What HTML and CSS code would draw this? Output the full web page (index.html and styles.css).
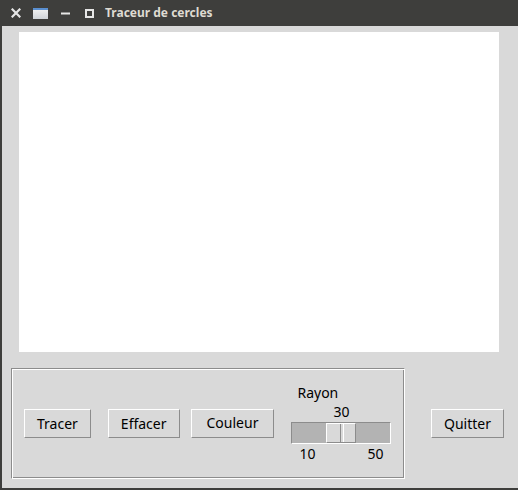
FILE: index.html
```html
<!DOCTYPE html>
<html lang="fr">
<head>
<meta charset="utf-8">
<title>Traceur de cercles</title>
<link rel="stylesheet" href="styles.css">
</head>
<body>
<div class="titlebar">
  <svg class="tb-icon tb-close" width="10" height="10" viewBox="0 0 10 10"><path d="M1.5 1.5 L8.5 8.5 M8.5 1.5 L1.5 8.5" stroke="#e6e6e6" stroke-width="2.2" stroke-linecap="square"/></svg>
  <svg class="tb-icon tb-app" width="15" height="11" viewBox="0 0 15 11"><defs><linearGradient id="g" x1="0" y1="0" x2="0" y2="1"><stop offset="0" stop-color="#f4f4f4"/><stop offset="1" stop-color="#cfd3d8"/></linearGradient></defs><rect x="0" y="0" width="15" height="11" fill="url(#g)"/><rect x="0" y="0" width="15" height="2" fill="#5a8fd0"/></svg>
  <svg class="tb-icon tb-min" width="9" height="9" viewBox="0 0 9 9"><rect x="0" y="3.5" width="9" height="2" fill="#e6e6e6"/></svg>
  <svg class="tb-icon tb-max" width="9" height="9" viewBox="0 0 9 9"><rect x="1" y="1" width="7" height="7" fill="none" stroke="#e6e6e6" stroke-width="2"/></svg>
  <span class="tb-title">Traceur de cercles</span>
</div>
<div class="window">
  <div class="canvas"></div>
  <div class="bottom">
    <div class="group">
      <button class="btn">Tracer</button>
      <button class="btn btn-effacer">Effacer</button>
      <button class="btn btn-couleur">Couleur</button>
      <div class="scale">
        <div class="scale-label">Rayon</div>
        <div class="scale-value">30</div>
        <div class="trough"><div class="handle" style="left: 34px"></div></div>
        <div class="scale-ends"><span>10</span><span>50</span></div>
      </div>
    </div>
    <button class="btn btn-quit">Quitter</button>
  </div>
</div>
</body>
</html>
```

FILE: styles.css
```css
* { box-sizing: border-box; }
html, body {
  margin: 0;
  padding: 0;
  width: 518px;
  height: 490px;
  overflow: hidden;
  background: #d9d9d9;
  font-family: "Noto Sans", "DejaVu Sans", sans-serif;
  font-size: 14px;
  color: #000;
}
.titlebar {
  height: 26px;
  background: #3e3e3c;
  display: flex;
  align-items: center;
  color: #dfdbd2;
}
.tb-icon { display: block; flex: none; }
.tb-close { margin-left: 11px; }
.tb-app { margin-left: 12px; }
.tb-min { margin-left: 13px; }
.tb-max { margin-left: 15px; }
.tb-title {
  margin-left: 11px;
  font-weight: bold;
  font-size: 12px;
  line-height: 16px;
}
.window {
  height: 464px;
  border-left: 2px solid #3e3e3c;
  border-bottom: 2px solid #3e3e3c;
  padding-top: 6px;
}
.canvas {
  width: 480px;
  height: 320px;
  margin-left: 17px;
  background: #fff;
}
.bottom {
  display: flex;
  align-items: center;
  margin-top: 16px;
  margin-left: 9px;
}
.group {
  display: flex;
  align-items: center;
  width: 394px;
  height: 111px;
  padding: 0 0 0 12px;
  border: 1px solid;
  border-color: #8c8c8c #fff #fff #8c8c8c;
  box-shadow: inset 1px 1px 0 #fff, inset -1px -1px 0 #8c8c8c;
}
.btn {
  font: inherit;
  color: #000;
  background: #d9d9d9;
  height: 29px;
  padding: 0 12px 1px;
  border: 1px solid;
  border-color: #fff #8c8c8c #8c8c8c #fff;
  border-radius: 0;
  line-height: 19px;
  margin: 0;
}
.btn-effacer { margin-left: 17px; }
.btn-couleur { margin-left: 11px; padding: 0 15px 1px; margin-top: -1px; }
.scale {
  margin-left: 17px;
  margin-top: -2px;
  width: 100px;
  line-height: 19px;
}
.scale-label { padding-left: 6px; }
.scale-value { text-align: center; }
.trough {
  position: relative;
  height: 22px;
  margin-top: 1px;
  background: #b3b3b3;
  border: 1px solid;
  border-color: #8c8c8c #fff #fff #8c8c8c;
}
.handle {
  position: absolute;
  top: 0;
  width: 30px;
  height: 20px;
  background: #d9d9d9;
  border: 1px solid;
  border-color: #fff #8c8c8c #8c8c8c #fff;
}
.handle::after {
  content: "";
  position: absolute;
  left: 13px;
  top: 0;
  bottom: 0;
  width: 2px;
  border-left: 1px solid #8c8c8c;
  border-right: 1px solid #fff;
}
.scale-ends {
  display: flex;
  justify-content: space-between;
  padding: 0 8px;
}
.btn-quit { margin-left: 26px; }
```
